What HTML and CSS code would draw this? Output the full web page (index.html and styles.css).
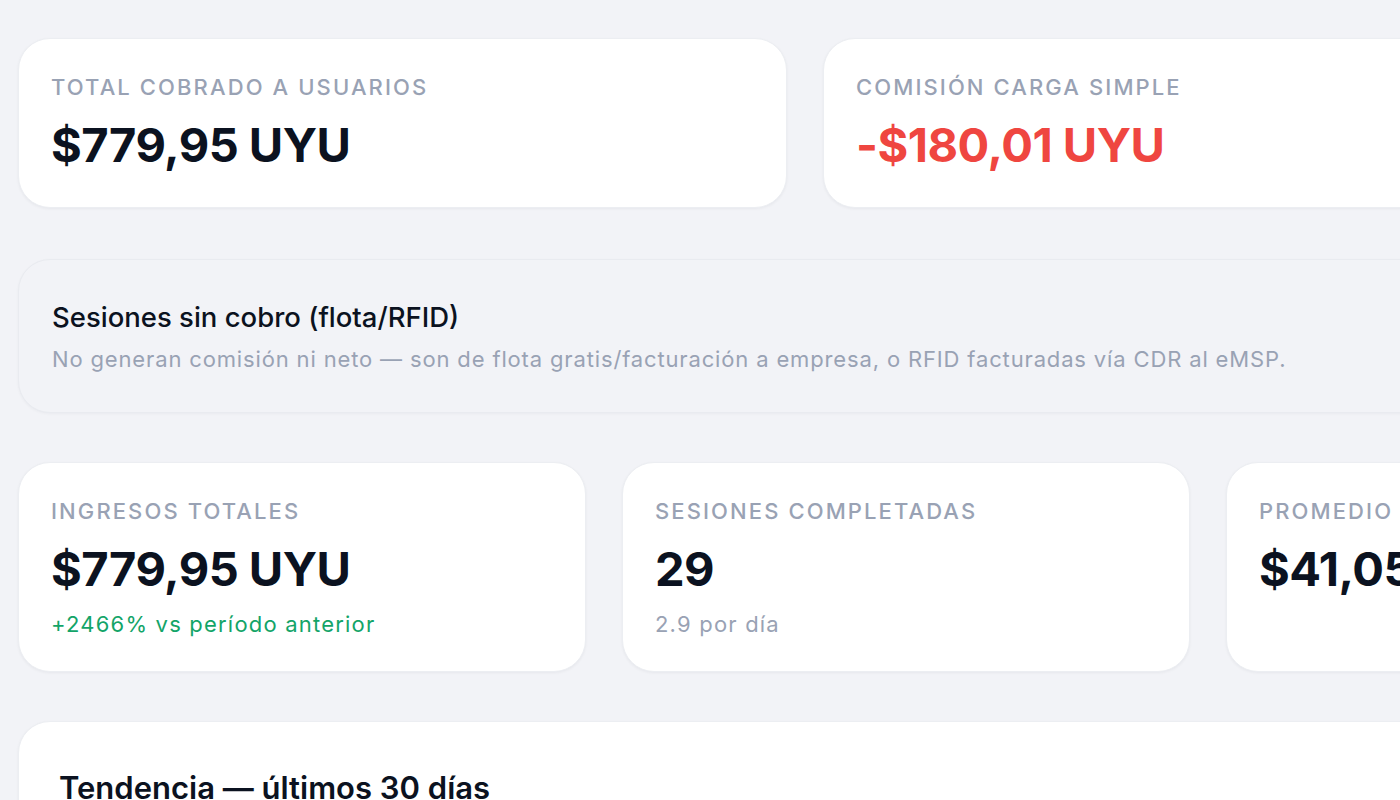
FILE: index.html
```html
<!DOCTYPE html>
<html lang="es">
<head>
<meta charset="utf-8">
<title>Dashboard</title>
<link rel="stylesheet" href="styles.css">
</head>
<body>
<main class="page">
  <section class="row row-2">
    <div class="card stat">
      <div class="label">Total cobrado a usuarios</div>
      <div class="value">$779,95 UYU</div>
    </div>
    <div class="card stat">
      <div class="label">Comisión carga simple</div>
      <div class="value neg">-$180,01 UYU</div>
    </div>
  </section>

  <section class="note">
    <div class="note-title">Sesiones sin cobro (flota/RFID)</div>
    <div class="note-sub">No generan comisión ni neto — son de flota gratis/facturación a empresa, o RFID facturadas vía CDR al eMSP.</div>
  </section>

  <section class="row row-4">
    <div class="card stat">
      <div class="label">Ingresos totales</div>
      <div class="value">$779,95 UYU</div>
      <div class="sub pos">+2466% vs período anterior</div>
    </div>
    <div class="card stat">
      <div class="label">Sesiones completadas</div>
      <div class="value">29</div>
      <div class="sub">2.9 por día</div>
    </div>
    <div class="card stat">
      <div class="label">Promedio por sesión</div>
      <div class="value">$41,05 UYU</div>
    </div>
    <div class="card stat">
      <div class="label">Energía total</div>
      <div class="value">0 kWh</div>
    </div>
  </section>

  <section class="card chart">
    <h2 class="chart-title">Tendencia — últimos 30 días</h2>
  </section>
</main>
</body>
</html>
```

FILE: styles.css
```css
html, body {
  margin: 0;
  padding: 0;
  overflow: hidden;
  background: #f2f3f7;
}
body {
  font-family: Inter, "Noto Sans", sans-serif;
  color: #0b1220;
  height: 800px;
}
.page {
  width: 1574px;
  padding: 38px 0 0 18px;
  display: flex;
  flex-direction: column;
}
.row {
  display: grid;
  gap: 36px;
}
.row-2 {
  grid-template-columns: 1fr 1fr;
}
.row-4 {
  grid-template-columns: repeat(4, 568px);
  margin-top: 49px;
}
.card {
  background: #ffffff;
  border: 1px solid #eceef2;
  border-radius: 32px;
  box-shadow: 0 1px 3px rgba(16, 24, 40, 0.05);
  box-sizing: border-box;
}
.stat {
  padding: 33px 32px 34px;
}
.label {
  font-size: 22px;
  line-height: 30px;
  font-weight: 500;
  letter-spacing: 2.1px;
  text-transform: uppercase;
  color: #99a2b4;
  white-space: nowrap;
}
.value {
  margin-top: 14px;
  font-size: 47px;
  line-height: 57px;
  font-weight: 700;
  letter-spacing: -0.5px;
  color: #0b1220;
  white-space: nowrap;
}
.value.neg {
  color: #ef4640;
}
.sub {
  margin-top: 14px;
  font-size: 22px;
  line-height: 26px;
  color: #99a2b4;
  letter-spacing: 1.2px;
}
.sub.pos {
  color: #13a468;
}
.note {
  margin-top: 51px;
  width: 1574px;
  box-sizing: border-box;
  border: 1px solid #e9ebf0;
  border-radius: 32px;
  box-shadow: 0 1px 3px rgba(16, 24, 40, 0.04);
  padding: 38px 33px 38px;
  background: #f2f3f7;
}
.note-title {
  font-size: 27.5px;
  line-height: 38px;
  font-weight: 500;
  color: #0b1220;
}
.note-sub {
  margin-top: 8px;
  font-size: 22px;
  line-height: 30px;
  color: #99a2b4;
  letter-spacing: 0.85px;
}
.chart {
  margin-top: 49px;
  height: 300px;
  padding: 45px 40px;
}
.chart-title {
  margin: 0;
  font-size: 31px;
  line-height: 42px;
  font-weight: 600;
  color: #0b1220;
}
```
